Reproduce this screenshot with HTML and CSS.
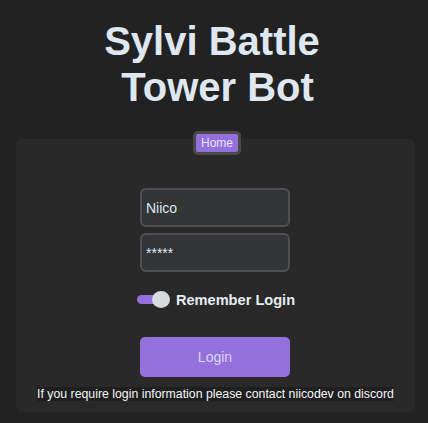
FILE: index.html
```html
<!DOCTYPE html>
<html>
<head>
<meta charset="utf-8">
<link rel="stylesheet" href="styles.css">
</head>
<body>
<h1 class="title">Sylvi Battle<br>&nbsp;Tower Bot</h1>
<div class="card">
  <span class="badge">Home</span>
  <form class="form">
    <input class="field" type="text" value="Niico">
    <input class="field field-pass" type="text" value="*****">
    <label class="remember">
      <span class="toggle"><span class="knob"></span></span>
      <span class="remember-text">Remember Login</span>
    </label>
    <button class="login" type="button">Login</button>
  </form>
  <p class="note"><span class="note-text">If you require login information please contact niicodev on discord</span></p>
</div>
</body>
</html>
```
FILE: styles.css
```css
* { box-sizing: border-box; }
html, body { margin: 0; padding: 0; }
body {
  background: #222222;
  font-family: "Liberation Sans", Arial, sans-serif;
  height: 423px;
  overflow: hidden;
}
.title {
  margin: 18px 0 0 0;
  padding-right: 4px;
  font-size: 40px;
  line-height: 46px;
  font-weight: bold;
  color: #dfe7f1;
  text-align: center;
}
.card {
  position: relative;
  margin: 29px 0 0 16px;
  width: 399px;
  height: 273px;
  background: #292929;
  border-radius: 6px;
  padding-top: 49px;
}
.badge {
  position: absolute;
  top: -8px;
  left: 177px;
  height: 24px;
  padding: 0 5px;
  border: 3px solid #494949;
  border-radius: 5px;
  background: #9370db;
  color: #e6e4ff;
  font-size: 12px;
  line-height: 18px;
}
.form {
  margin: 0;
  padding-right: 1px;
  display: flex;
  flex-direction: column;
  align-items: center;
}
.field {
  width: 150px;
  height: 39px;
  margin: 0 0 6px 0;
  border: 2px solid #4c5053;
  border-radius: 6px;
  background: #323436;
  color: #dfe7f1;
  font-family: "Liberation Sans", Arial, sans-serif;
  font-size: 14px;
  padding: 0 0 0 4px;
  outline: none;
}
.field-pass { margin-bottom: 0; }
.remember {
  display: flex;
  align-items: center;
  gap: 6px;
  margin: 19px 0 0 2px;
  height: 17px;
}
.toggle {
  position: relative;
  width: 33px;
  height: 17px;
  display: block;
}
.toggle::before {
  content: "";
  position: absolute;
  left: 0;
  top: 4px;
  width: 24px;
  height: 9px;
  border-radius: 5px;
  background: #9370db;
}
.knob {
  position: absolute;
  right: 0;
  top: 0;
  width: 18px;
  height: 17px;
  border-radius: 50%;
  background: #d7dade;
}
.remember-text {
  font-weight: bold;
  font-size: 14.6px;
  color: #e6ecf4;
}
.login {
  margin-top: 29px;
  width: 150px;
  height: 40px;
  border: none;
  border-radius: 5px;
  background: #9370db;
  color: #dcd4f6;
  font-family: "Liberation Sans", Arial, sans-serif;
  font-size: 14px;
}
.note {
  margin: 10px 0 0 0;
  text-align: center;
  font-size: 12.3px;
  line-height: 14px;
}
.note-text {
  background: #1f1f1f;
  color: #f4f6f8;
}
```
